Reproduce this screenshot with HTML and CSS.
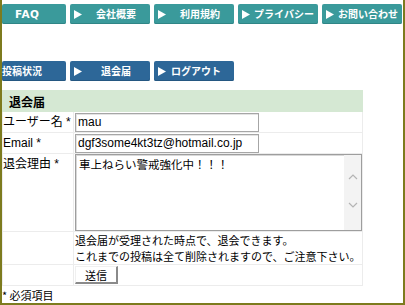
FILE: index.html
```html
<!DOCTYPE html>
<html lang="ja">
<head>
<meta charset="utf-8">
<link rel="stylesheet" href="styles.css">
</head>
<body>
<div class="frame">
  <nav class="nav nav-top">
    <a class="btn teal faq">FAQ</a>
    <a class="btn teal"><svg class="tri" viewBox="0 0 8 9"><polygon points="0,0 8,4.5 0,9" fill="#fff"/></svg><span class="lbl">会社概要</span></a>
    <a class="btn teal"><svg class="tri" viewBox="0 0 8 9"><polygon points="0,0 8,4.5 0,9" fill="#fff"/></svg><span class="lbl">利用規約</span></a>
    <a class="btn teal"><svg class="tri" viewBox="0 0 8 9"><polygon points="0,0 8,4.5 0,9" fill="#fff"/></svg><span class="lbl">プライバシー</span></a>
    <a class="btn teal"><svg class="tri" viewBox="0 0 8 9"><polygon points="0,0 8,4.5 0,9" fill="#fff"/></svg><span class="lbl">お問い合わせ</span></a>
  </nav>
  <nav class="nav nav-user">
    <a class="btn blue status">投稿状況</a>
    <a class="btn blue"><svg class="tri" viewBox="0 0 8 9"><polygon points="0,0 8,4.5 0,9" fill="#fff"/></svg><span class="lbl">退会届</span></a>
    <a class="btn blue tight"><svg class="tri" viewBox="0 0 8 9"><polygon points="0,0 8,4.5 0,9" fill="#fff"/></svg><span class="lbl">ログアウト</span></a>
  </nav>
  <table class="form">
    <tr class="r-head"><th colspan="2" class="head">退会届</th></tr>
    <tr class="r-line">
      <td class="label">ユーザー名 *</td>
      <td class="field"><div class="input">mau</div></td>
    </tr>
    <tr class="r-line">
      <td class="label">Email *</td>
      <td class="field"><div class="input">dgf3some4kt3tz@hotmail.co.jp</div></td>
    </tr>
    <tr class="r-area">
      <td class="label">退会理由 *</td>
      <td class="field area-cell">
        <div class="textarea">
          <div class="area-text">車上ねらい警戒強化中！！！</div>
          <div class="scroll">
            <svg class="chev" viewBox="0 0 10 6"><polyline points="1,5 5,1 9,5" fill="none" stroke="#b4b4b4" stroke-width="1.2"/></svg>
            <svg class="chev" viewBox="0 0 10 6"><polyline points="1,1 5,5 9,1" fill="none" stroke="#b4b4b4" stroke-width="1.2"/></svg>
          </div>
        </div>
      </td>
    </tr>
    <tr class="r-note">
      <td class="label"></td>
      <td class="note">退会届が受理された時点で、退会できます。<br>これまでの投稿は全て削除されますので、ご注意下さい。</td>
    </tr>
    <tr class="r-line">
      <td class="label"></td>
      <td class="field"><button class="submit">送信</button></td>
    </tr>
  </table>
  <p class="required">* 必須項目</p>
</div>
</body>
</html>
```
FILE: styles.css
```css
html, body {
  margin: 0;
  padding: 0;
  background: #fff;
}
body {
  width: 405px;
  height: 305px;
  overflow: hidden;
  font-family: "Liberation Sans", "Noto Sans CJK JP", sans-serif;
  color: #000;
}
.frame {
  box-sizing: border-box;
  width: 405px;
  height: 305px;
  border: 2px solid #7d7b1e;
  border-top: none;
  padding-top: 4px;
}
.nav {
  display: flex;
  gap: 4px;
}
.nav-user {
  margin-top: 37px;
}
.btn {
  box-sizing: border-box;
  width: 80px;
  height: 20px;
  display: flex;
  align-items: center;
  padding-left: 4px;
  border-radius: 2px;
  color: #fff;
  font-family: "Noto Sans CJK JP", sans-serif;
  font-weight: bold;
  font-size: 10px;
  line-height: 1;
  text-decoration: none;
}
.teal {
  background: #3a9a9b;
  box-shadow: inset 0 -1px 0 #2f8586;
}
.blue {
  background: #2d6798;
  box-shadow: inset 0 -1px 0 #245781;
}
.faq {
  width: 64px;
  padding-left: 13px;
  font-family: "DejaVu Sans", sans-serif;
  font-size: 10.5px;
  letter-spacing: 0.5px;
}
.status {
  width: 64px;
  padding-left: 0;
}
.tri {
  width: 8px;
  height: 9px;
  flex: none;
}
.lbl {
  flex: 1;
  text-align: center;
  white-space: nowrap;
}
.tight {
  gap: 5px;
}
.tight .lbl {
  flex: none;
  text-align: left;
}
.form {
  margin-top: 9px;
  width: 361px;
  border-collapse: collapse;
  font-size: 12px;
  line-height: 17px;
}
.form td, .form th {
  padding: 0;
  border: 1px solid #ececec;
  box-sizing: border-box;
  vertical-align: top;
}
.r-head { height: 21px; }
.r-line { height: 21px; }
.r-area { height: 78px; }
.r-note { height: 32px; }
.head {
  background: #d5e8d3;
  text-align: left;
  padding: 2px 0 0 6px !important;
  font-family: "Noto Sans CJK JP", sans-serif;
  font-size: 12px;
  line-height: 17px;
  font-weight: bold;
  border-color: #d5e8d3 !important;
}
.label {
  width: 72px;
  white-space: nowrap;
  font-size: 12px;
  line-height: 17px;
  padding-top: 2px !important;
}
.field {
  padding: 1px 0 0 1px !important;
}
.area-cell {
  padding-top: 0 !important;
}
.input {
  box-sizing: border-box;
  width: 184px;
  height: 19px;
  border: 1px solid #a6a6a6;
  box-shadow: inset 1px 1px 0 #e4e4e4;
  padding-left: 2px;
  font-size: 12px;
  line-height: 17px;
  white-space: nowrap;
}
.textarea {
  box-sizing: border-box;
  width: 287px;
  height: 77px;
  border: 1px solid #9e9e9e;
  box-shadow: inset 1px 1px 0 #d8d8d8;
  display: flex;
}
.area-text {
  flex: 1;
  padding: 2px 0 0 3px;
  font-size: 11.5px;
  line-height: 14px;
  font-family: "Noto Sans CJK JP", sans-serif;
}
.scroll {
  width: 17px;
  background: #f3f3f3;
  display: flex;
  flex-direction: column;
  align-items: center;
  padding-top: 19px;
  gap: 22px;
}
.chev {
  width: 10px;
  height: 6px;
}
.note {
  padding: 0 0 0 1px !important;
  font-family: "Noto Sans CJK JP", sans-serif;
  font-size: 11px;
  line-height: 16px;
  white-space: nowrap;
}
.submit {
  display: block;
  box-sizing: border-box;
  width: 43px;
  height: 18px;
  margin: 0;
  padding: 0;
  background: #fff;
  border: 1px solid #f0f0f0;
  border-right: 2px solid #8a8a8a;
  border-bottom: 2px solid #8a8a8a;
  font-family: "Noto Sans CJK JP", sans-serif;
  font-size: 11px;
  line-height: 14px;
  color: #000;
}
.required {
  margin: 2px 0 0 0;
  font-family: "Noto Sans CJK JP", sans-serif;
  font-size: 11px;
  line-height: 15px;
}
```
